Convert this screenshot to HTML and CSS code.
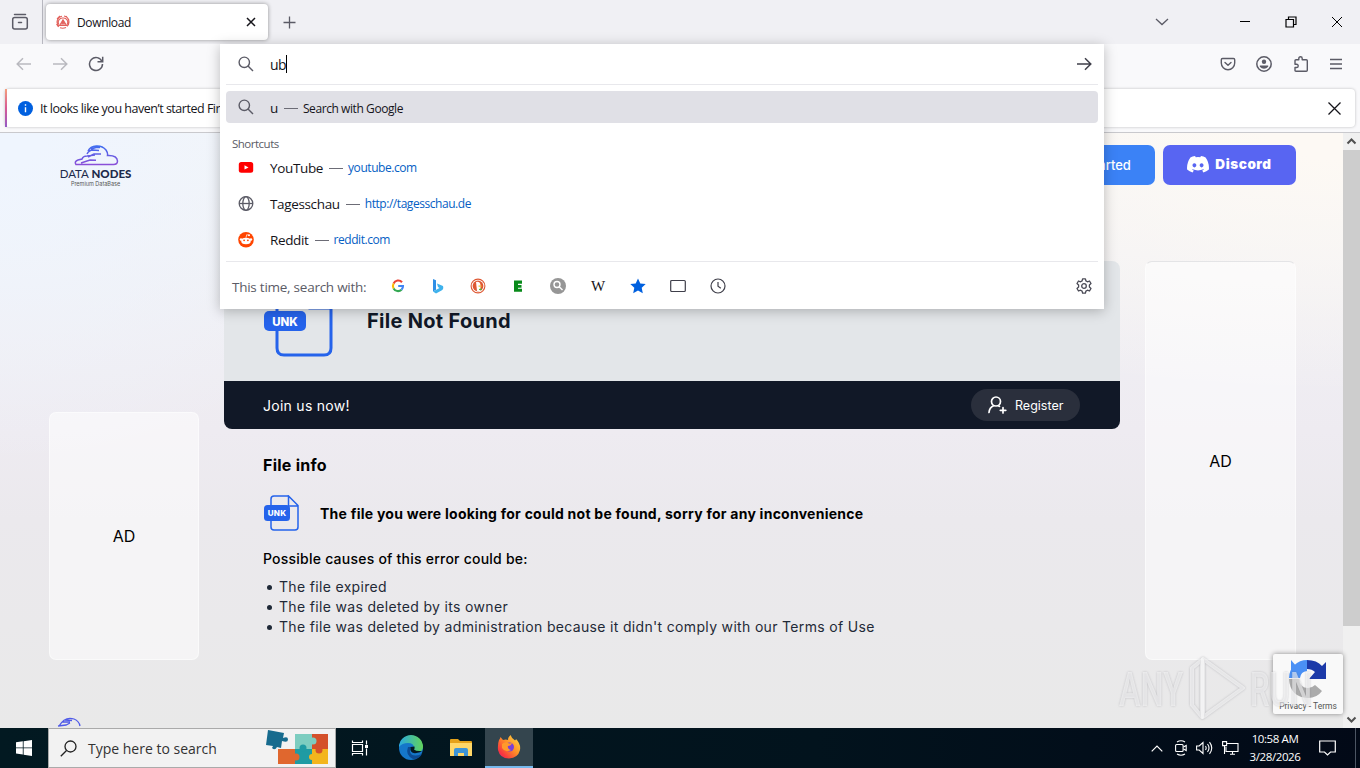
FILE: index.html
```
<!DOCTYPE html>
<html lang="en">
<head>
  <meta charset="UTF-8">
  <title>Download</title>
  <link rel="stylesheet" href="styles.css">
</head>
<body>
  <div class="tabstrip">
    <div class="view-button">
      <svg width="18" height="18" viewBox="0 0 18 18" fill="none" stroke="#5b5b66" stroke-width="1.5" stroke-linecap="round"><path d="M3.5 1.5h11"/><rect x="1.7" y="4.5" width="14.6" height="11.5" rx="2"/><path d="M7.500 9.500h3"/></svg>
    </div>
    <div class="tab">
      <svg width="14" height="14" viewBox="0 0 14 14" fill="none" stroke="#e2605b" stroke-width="1.1"><path d="M3 11.500A6 6 0 0 1 6 1.200M8 1a6 6 0 0 1 3 10.300M4 12.800q3 1 6-.3M3 9.500A4.200 4.200 0 0 1 7 3a4.200 4.200 0 0 1 4 6.500M1 4l3-3M10 1l3 4M.5 9l2 3"/><path d="M3.600 10.500L7 4.800l3.500 5.700zM6 9l1-2 1.200 2" fill="#e2605b" fill-opacity=".55"/></svg>
      <span class="tab-title">Download</span>
      <svg class="tab-close" width="10" height="10" viewBox="0 0 10 10" stroke="#15141a" stroke-width="1.500"><path d="M1 1l8 8M9 1L1 9"/></svg>
    </div>
    <svg class="new-tab" width="13" height="13" viewBox="0 0 13 13" stroke="#5b5b66" stroke-width="1.300"><path d="M6.500 .5v12M.5 6.500h12"/></svg>
    <div class="window-controls">
      <svg class="list-tabs" width="14" height="8" viewBox="0 0 14 8" fill="none" stroke="#5b5b66" stroke-width="1.300"><path d="M1 1l6 5.500L13 1"/></svg>
      <svg width="12" height="12" viewBox="0 0 12 12" stroke="#000"><path d="M1 5.500h10"/></svg>
      <svg width="12" height="12" viewBox="0 0 12 12" fill="none" stroke="#000" stroke-width="1.200"><path d="M1 3.500h7.500V11H1zM3.500 3.500V1H11v7.500H8.500"/></svg>
      <svg width="12" height="12" viewBox="0 0 12 12" stroke="#000"><path d="M1 1l10 10M11 1L1 11"/></svg>
    </div>
  </div>

  <div class="toolbar">
    <div class="nav-buttons">
      <svg class="disabled" width="16" height="14" viewBox="0 0 16 14" fill="none" stroke="#5b5b66" stroke-width="1.500"><path d="M15 7H1.500M7 1.200L1.200 7 7 12.800"/></svg>
      <svg class="disabled" width="16" height="14" viewBox="0 0 16 14" fill="none" stroke="#5b5b66" stroke-width="1.500"><path d="M1 7h13.500M9 1.200L14.800 7 9 12.800"/></svg>
      <svg width="16" height="16" viewBox="0 0 16 16" fill="none" stroke="#5b5b66" stroke-width="1.500"><path d="M14 5.500A6.500 6.500 0 1 0 14.500 8M14.700 .8v5H9.500"/></svg>
    </div>
    <div class="tool-buttons">
      <svg width="16" height="16" viewBox="0 0 16 16" fill="none" stroke="#5b5b66" stroke-width="1.400" stroke-linecap="round" stroke-linejoin="round"><path d="M2.500 2.500h11q1.200 0 1.200 1.200V7a6.700 6.700 0 0 1-13.400 0V3.700q0-1.200 1.200-1.200zM5 6.500l3 2.800 3-2.800"/></svg>
      <svg width="16" height="16" viewBox="0 0 16 16"><circle cx="8" cy="8" r="7.200" fill="none" stroke="#5b5b66" stroke-width="1.500"/><circle cx="8" cy="5.800" r="2.200" fill="#5b5b66"/><path d="M3.800 9.600h8.400v1.200q-1.800 2-4.200 2t-4.200-2z" fill="#5b5b66"/></svg>
      <svg width="16" height="16" viewBox="0 0 16 16" fill="none" stroke="#5b5b66" stroke-width="1.400" stroke-linejoin="round"><path d="M5.800 3.800V2.500q0-1.700 1.700-1.700t1.700 1.700v1.300h4.100q1 0 1 1v9.400q0 1-1 1H3q-1 0-1-1v-2.700h1.500q1.700 0 1.700-1.600T3.500 8.300H2V4.800q0-1 1-1z"/></svg>
      <svg width="14" height="12" viewBox="0 0 14 12" stroke="#5b5b66" stroke-width="1.400"><path d="M1 1.500h12M1 6h12M1 10.500h12"/></svg>
    </div>
  </div>

  <div class="notification-area">
    <div class="notification">
      <svg width="15" height="15" viewBox="0 0 15 15"><circle cx="7.500" cy="7.500" r="7.500" fill="#0060df"/><path d="M7.500 3.200v1.600M7.500 6.300v5" stroke="#fff" stroke-width="1.400"/></svg>
      <span class="notification-text">It looks like you haven’t started Firefox</span>
      <svg class="notification-close" width="13" height="13" viewBox="0 0 13 13" stroke="#15141a" stroke-width="1.300"><path d="M.5 .5l12 12M12.500 .5l-12 12"/></svg>
    </div>
  </div>

  <div class="viewport">
    <div class="page">
      <div class="site-header">
        <div class="logo">
          <svg width="46" height="22" viewBox="0 0 46 22" fill="none" stroke="#4f5ae8" stroke-width="1.500"><path d="M15 6C18 0 28-1 33 5q2 3 1.500 5.500Q44 10 44.500 16q0 3.500-4 3.500H3q-2-3 2-4.500l4-1q1-3 5-3l8-1M8 18l9-3 6 .2M14 9q2-4 6-4l6 .5M18 4l5-1.500h4M15 12l6-3h7" stroke="url(#cloud)"/><defs><linearGradient id="cloud" x1="0" y1="0" x2="0" y2="1"><stop offset="0" stop-color="#3f6df0"/><stop offset="1" stop-color="#8a4fd8"/></linearGradient></defs></svg>
          <div class="logo-name">DATA <b>NODES</b></div>
          <div class="logo-tag">Premium DataBase</div>
        </div>
        <div class="header-buttons">
          <div class="btn btn-start">Get Started</div>
          <div class="btn btn-discord">
            <svg width="22" height="17" viewBox="0 0 22 17"><path fill="#fff" fill-rule="evenodd" d="M8 0L8.800 1.300Q11 .9 13.200 1.300L14 0q2.500.3 4.600 1.500Q22.500 7 21.900 13.500 19.500 15.600 16.400 16.500l-1.200-2 1.700-.8-.5-.4q-5.400 2.300-10.800 0l-.5.4 1.700.8-1.200 2Q2.500 15.600.1 13.500-.5 7 3.400 1.500 5.500.3 8 0zM7.400 7.200a1.900 2.100 0 1 0 .01 0zM14.600 7.200a1.900 2.100 0 1 0 .01 0z"/></svg>
            <span>Discord</span>
          </div>
        </div>
      </div>

      <div class="columns">
        <div class="ad ad-left">AD</div>
        <div class="main">
          <div class="card">
            <div class="card-top">
              <svg width="70" height="72" viewBox="0 0 70 72"><path d="M44 2H19q-6 0-6 6v54q0 7 7 7h40q7 0 7-7V22L46 2v20h20" fill="none" stroke="#2563eb" stroke-width="3"/><rect x="0" y="25" width="42" height="20" rx="5" fill="#2563eb"/><text class="badge-text" x="21" y="39.500" font-size="11.500" text-anchor="middle">UNK</text></svg>
              <h1 class="card-title">File Not Found</h1>
            </div>
            <div class="card-bar">
              <span class="join">Join us now!</span>
              <div class="register">
                <svg width="19" height="18" viewBox="0 0 19 18" fill="none" stroke="#fff" stroke-width="1.700" stroke-linecap="round"><circle cx="8" cy="5.500" r="4.500"/><path d="M1 16.500q.5-5 4.500-6.700M10.500 9.800l1 .6M15 11.500v5.500M12.300 14.300h5.500"/></svg>
                <span>Register</span>
              </div>
            </div>
          </div>
          <div class="info">
            <h2 class="info-title">File info</h2>
            <div class="info-message">
              <svg width="35" height="36" viewBox="0 0 35 36"><path d="M24 1H10Q7 1 7 4v28q0 3 3 3h21q3 0 3-3V10.500L24.500 1v10H34" fill="none" stroke="#2563eb" stroke-width="1.500"/><rect x="0" y="10" width="26" height="16" rx="3.500" fill="#2563eb"/><text class="badge-text" x="13" y="21.200" font-size="8" text-anchor="middle">UNK</text></svg>
              <span>The file you were looking for could not be found, sorry for any inconvenience</span>
            </div>
            <p class="causes">Possible causes of this error could be:</p>
            <ul class="cause-list">
              <li>The file expired</li>
              <li>The file was deleted by its owner</li>
              <li>The file was deleted by administration because it didn't comply with our Terms of Use</li>
            </ul>
          </div>
        </div>
        <div class="ad ad-right">AD</div>
      </div>

      <svg class="footer-logo" width="46" height="22" viewBox="0 0 46 22" fill="none" stroke="#4f5ae8" stroke-width="1.300"><path d="M3 9Q9-1 18 2q5 2 6 7M6 5h8M9 3l7 .5M2 9l8-1 4-2"/></svg>

      <div class="recaptcha">
        <svg width="38" height="38" viewBox="0 0 38 38"><path d="M0 18A18 18 0 0 1 18 0v11a8 8 0 0 0-7 7z" fill="#4a90f5"/><path d="M2 0v12l6-5z" fill="#4a90f5"/><path d="M18 0q10 0 15 6l4-4v17H20l6-7q-3-3-8-3z" fill="#1c3aa9"/><path d="M0 19h10q1 9 9 9 4 0 7-3l7 6q-5 7-14 7Q1 37 0 19z" fill="#ababab"/></svg>
        <span>Privacy - Terms</span>
      </div>
    </div>
    <div class="scrollbar">
      <svg width="17" height="17" viewBox="0 0 17 17" fill="none" stroke="#505050" stroke-width="2"><path d="M4.500 10.500l4-4 4 4"/></svg>
      <div class="thumb"></div>
      <svg class="scroll-down" width="17" height="17" viewBox="0 0 17 17" fill="none" stroke="#505050" stroke-width="2"><path d="M4.500 6.500l4 4 4-4"/></svg>
    </div>
  </div>

  <div class="taskbar">
    <div class="start">
      <svg width="16" height="16" viewBox="0 0 16 16" fill="#fff"><path d="M0 2.300L6.800 1.300v6.200H0zM7.600 1.200L16 0v7.500H7.600zM0 8.300h6.800v6.300L0 13.600zM7.600 8.300H16V16l-8.400-1.200z"/></svg>
    </div>
    <div class="search">
      <svg width="17" height="17" viewBox="0 0 17 17" fill="none" stroke="#222" stroke-width="1.300"><circle cx="10.500" cy="6.500" r="5.500"/><path d="M6.500 10.500L.8 16.200"/></svg>
      <span class="search-text">Type here to search</span>
      <svg class="puzzle" width="64" height="36" viewBox="0 0 64 36"><path d="M29 4h17v15H29z" fill="#7dcdc0"/><path d="M46 4h16v15H46z" fill="#d4502b"/><path d="M12 19h17v15H12z" fill="#e0672e"/><path d="M29 19h17v15H29z" fill="#1f9ba3"/><path d="M46 19h16v15H46z" fill="#f3b51d"/><circle cx="47" cy="11" r="3.500" fill="#7dcdc0"/><circle cx="37" cy="18" r="3.500" fill="#1f9ba3"/><circle cx="53" cy="20" r="3.500" fill="#d4502b"/><circle cx="30" cy="27" r="3.500" fill="#e0672e"/><circle cx="46" cy="27" r="3" fill="#f3b51d"/><path d="M2 0l16 3-1 5q5-2 5 1.500t-6 1.500l-1 7-4-1q-2 4-5 1l1-2-7-1z" fill="#176b8e"/></svg>
    </div>
    <div class="task">
      <svg width="18" height="18" viewBox="0 0 18 18" fill="none" stroke="#fff" stroke-width="1.200"><path d="M1.500 1.500v2h10v-2M1.500 16.500v-2h10v2M1.500 5.500h10v7h-10zM15.500 1.500v4M15.500 9.500v7"/><path d="M14 6h3v3h-3z" fill="#fff" stroke="none"/></svg>
    </div>
    <div class="task task-edge">
      <svg width="26" height="26" viewBox="0 0 26 26"><defs><linearGradient id="edgeTop" x1="0" x2="1"><stop offset="0" stop-color="#2aa9e0"/><stop offset="1" stop-color="#62d35a"/></linearGradient></defs><circle cx="13" cy="13" r="12" fill="#1577ca"/><path d="M1 12A12 12 0 0 1 25 12q0 5-6 5-5 0-3-4 0-5-6-5-6 0-9 4z" fill="url(#edgeTop)"/><path d="M10 12q-3 8 5 12 6 .5 9-5-10 4-12-2-1-3 1-5z" fill="#0c4b93"/><path d="M12.500 12q-1 7 6 6 4-.5 5.500-2-6 .5-8-1.500 1-1 .5-3z" fill="#041922"/></svg>
    </div>
    <div class="task task-files">
      <svg width="22" height="20" viewBox="0 0 22 20"><path d="M0 2q0-1 1-1h7l2 2h11q1 0 1 1v14H0z" fill="#e5a21a"/><path d="M0 5h22v13H0z" fill="#ffd768"/><path d="M4 18v-6q0-2 2-2h10q2 0 2 2v6h-4v-3H8v3z" fill="#3d94d6"/></svg>
    </div>
    <div class="task task-active">
      <svg width="24" height="24" viewBox="0 0 24 24"><defs><linearGradient id="fox" x1="1" y1="0" x2="0" y2="1"><stop offset="0" stop-color="#ffe14a"/><stop offset=".45" stop-color="#ff9127"/><stop offset=".8" stop-color="#f8363f"/><stop offset="1" stop-color="#e3207a"/></linearGradient></defs><path d="M2 5q1-1 1.500-3l2.500 3q3-1 5 0 0-3 2.500-5 1 3 4 5 1 1 1.500-1 5 5 4 11-2 8-11 8.500Q3 23.500 1 15 .5 9 2 5z" fill="url(#fox)"/><circle cx="12.500" cy="12" r="4.500" fill="#7a3fd8"/><path d="M5 9q4-3 7-.5l3-.5q-1 3-4 3-1 3 3 4-6 3-9-2z" fill="#ff9a2b"/></svg>
    </div>
    <div class="tray">
      <svg width="12" height="7" viewBox="0 0 12 7" fill="none" stroke="#fff" stroke-width="1.200"><path d="M.7 6.300L6 1l5.300 5.300"/></svg>
      <svg width="12" height="16" viewBox="0 0 12 16" fill="none" stroke="#fff" stroke-width="1.100"><rect x=".6" y="4.500" width="7.500" height="7" rx="1"/><path d="M8.500 7l2.700-1.500v5L8.500 9M2 2q4-2.500 8 0M2 14q4 2.500 8 0"/></svg>
      <svg width="17" height="14" viewBox="0 0 17 14" fill="none" stroke="#fff" stroke-width="1.100"><path d="M.6 5h2.600L7 1.500v11L3.200 9H.6zM9.500 5q1.300 2 0 4M11.500 3q3 4 0 8M13.500 1.200q4.500 5.800 0 11.600"/></svg>
      <svg width="17" height="14" viewBox="0 0 17 14" fill="none" stroke="#fff" stroke-width="1.100"><path d="M5 2.500h11v8H4V6M8 13.300h5M10.500 10.500v3M.6 .6h4v4h-4zM2.500 4.600v8.500"/></svg>
      <div class="clock"><span class="time">10:58 AM</span><span>3/28/2026</span></div>
      <svg width="17" height="16" viewBox="0 0 17 16" fill="none" stroke="#fff" stroke-width="1.200"><path d="M.7 1h15.600v11h-4.800L8.500 15l-3-3H.7z"/></svg>
    </div>
    <div class="show-desktop"></div>
  </div>

  <!-- address bar dropdown -->
  <div class="urlbar">
    <div class="url-input">
      <svg width="16" height="16" viewBox="0 0 16 16" fill="none" stroke="#5b5b66" stroke-width="1.400"><circle cx="6.300" cy="6.300" r="5.200"/><path d="M10 10l5 5"/></svg>
      <span class="typed">ub</span><span class="caret"></span>
      <svg class="go" width="16" height="14" viewBox="0 0 16 14" fill="none" stroke="#3f3f4a" stroke-width="1.500"><path d="M1 7h13.500M9 1.200L14.800 7 9 12.800"/></svg>
    </div>
    <div class="results">
      <div class="result selected">
        <svg width="16" height="16" viewBox="0 0 16 16" fill="none" stroke="#5b5b66" stroke-width="1.400"><circle cx="6.300" cy="6.300" r="5.200"/><path d="M10 10l5 5"/></svg>
        <span class="name">u</span><i class="dash"></i><span class="action">Search with Google</span>
      </div>
      <div class="group-label">Shortcuts</div>
      <div class="result">
        <svg width="16" height="16" viewBox="0 0 16 16"><rect x=".8" y="2" width="14.400" height="10.800" rx="2.500" fill="#f00"/><path d="M6.500 5.200l4 2.200-4 2.200z" fill="#fff"/></svg>
        <span class="name">YouTube</span><i class="dash"></i><span class="url">youtube.com</span>
      </div>
      <div class="result">
        <svg width="16" height="16" viewBox="0 0 16 16" fill="none" stroke="#5b5b66" stroke-width="1.300"><circle cx="8" cy="7.500" r="6.800"/><ellipse cx="8" cy="7.500" rx="3.200" ry="6.800"/><path d="M1.200 7.500h13.600"/></svg>
        <span class="name">Tagesschau</span><i class="dash"></i><span class="url">http://tagesschau.de</span>
      </div>
      <div class="result">
        <svg width="16" height="16" viewBox="0 0 16 16"><circle cx="8" cy="7.800" r="7.800" fill="#ff4500"/><ellipse cx="8" cy="9" rx="4.800" ry="3.300" fill="#fff"/><circle cx="3" cy="7.500" r="1.200" fill="#fff"/><circle cx="13" cy="7.500" r="1.200" fill="#fff"/><circle cx="11" cy="3.200" r="1" fill="#fff"/><path d="M8 5.700l.7-3 2 .5" stroke="#fff" stroke-width=".7" fill="none"/><circle cx="6.100" cy="8.300" r=".9" fill="#ff4500"/><circle cx="9.900" cy="8.300" r=".9" fill="#ff4500"/></svg>
        <span class="name">Reddit</span><i class="dash"></i><span class="url">reddit.com</span>
      </div>
    </div>
    <div class="one-offs">
      <span class="one-offs-label">This time, search with:</span>
      <div class="engines">
        <svg width="16" height="16" viewBox="0 0 16 16" fill="none" stroke-width="2.100"><path d="M12 4.200A5 5 0 0 0 3.600 5.500" stroke="#ea4335"/><path d="M3.600 5.500a5 5 0 0 0 0 5" stroke="#fbbc05"/><path d="M3.600 10.500a5 5 0 0 0 7.900 1.200" stroke="#34a853"/><path d="M11.500 11.700A5 5 0 0 0 13 8H8.200" stroke="#4285f4"/></svg>
        <svg width="16" height="16" viewBox="0 0 16 16"><path d="M3 1l3 1.200v9.500L3 13.500z" fill="#2f8fe6"/><path d="M7 5.500l6 2.500q1 3-1.500 4.500L6 15.500l-3-2 6.500-3.500-1.500-1z" fill="#3fb2ec"/></svg>
        <svg width="16" height="16" viewBox="0 0 16 16"><circle cx="8" cy="8" r="6.900" fill="#fff" stroke="#de5833" stroke-width="1.100"/><circle cx="8" cy="8" r="5.400" fill="#de5833"/><path d="M6 4q4-1 4.500 3v6q-2 .6-3.500 0z" fill="#fff"/><path d="M8.500 7.500h3v1.200h-3z" fill="#fdbe2d"/><path d="M9 11l2.500-.8v2L9 12z" fill="#4cba3c"/></svg>
        <svg width="16" height="16" viewBox="0 0 16 16"><path d="M4 2.500h8v3.300H8v1.200h3.500v2.800H8v1H12v3H4z" fill="#088a1a"/></svg>
        <svg width="16" height="16" viewBox="0 0 16 16"><circle cx="8" cy="8" r="8" fill="#969696"/><g fill="none" stroke="#fff" stroke-width="1.400"><circle cx="7" cy="6.500" r="3"/><path d="M9.200 8.700l3.300 3.300"/></g></svg>
        <span class="wiki">W</span>
        <svg width="16" height="16" viewBox="0 0 16 16"><path d="M8 .5l2.300 4.900 5.400.7-4 3.700 1.100 5.500L8 12.600l-4.800 2.700 1.100-5.500-4-3.700 5.400-.7z" fill="#0060df"/></svg>
        <svg width="16" height="16" viewBox="0 0 16 16" fill="none" stroke="#3f3f4a" stroke-width="1.200"><rect x=".7" y="2.500" width="14.600" height="11" rx="1"/></svg>
        <svg width="16" height="16" viewBox="0 0 16 16" fill="none" stroke="#3f3f4a" stroke-width="1.200"><circle cx="8" cy="8" r="7"/><path d="M8 4v4.200l2.800 2"/></svg>
      </div>
      <svg class="gear" width="16" height="16" viewBox="0 0 16 16" fill="none" stroke="#4a4a55" stroke-width="1.300" stroke-linejoin="round"><circle cx="8" cy="8" r="2.300"/><path d="M6.600 .8h2.800l.5 2.100 1.600.9 2-.8 1.500 2.500-1.600 1.500v2l1.600 1.500-1.500 2.500-2-.8-1.600.9-.5 2.100H6.600l-.5-2.100-1.600-.9-2 .8L1 10.500 2.600 9V7L1 5.500 2.500 3l2 .8 1.600-.9z"/></svg>
    </div>
  </div>

  <svg class="watermark" width="210" height="70" viewBox="0 0 210 70">
    <text x="4" y="52" textLength="64" lengthAdjust="spacingAndGlyphs">ANY</text>
    <text x="135" y="52" textLength="62" lengthAdjust="spacingAndGlyphs">RUN</text>
    <g class="watermark-mark"><path d="M77 14v37l10 12V6z"/><path d="M88 5v58l40-29z"/></g>
  </svg>
</body>
</html>
```
FILE: styles.css
```
* {
  box-sizing: border-box;
}

body {
  margin: 0;
  width: 1360px;
  height: 768px;
  overflow: hidden;
  display: flex;
  flex-direction: column;
  font-family: "Open Sans", "Noto Sans", sans-serif;
  font-size: 13px;
  color: #15141a;
  position: relative;
}

svg {
  flex: none;
  display: block;
}

span {
  white-space: nowrap;
}

/* browser chrome */
.tabstrip {
  height: 44px;
  background: #f0f0f4;
  display: flex;
  align-items: center;
}

.view-button {
  width: 43px;
  height: 44px;
  padding: 13px 0 0 11px;
  border-right: 1px solid #b8b8c0;
}

.tab {
  width: 222px;
  height: 36px;
  margin-left: 3px;
  padding: 0 12px 0 10px;
  display: flex;
  align-items: center;
  background: #fff;
  border-radius: 4px;
  box-shadow: 0 0 4px rgba(0, 0, 0, 0.4);
}

.tab-title {
  margin-left: 7px;
  font-size: 12px;
  letter-spacing: -0.35px;
}

.tab-close {
  margin-left: auto;
}

.new-tab {
  margin-left: 15px;
}

.window-controls {
  margin-left: auto;
  padding-right: 17px;
  display: flex;
  align-items: center;
  gap: 34px;
}

.list-tabs {
  margin-right: 36px;
}

.toolbar {
  height: 44px;
  background: #f9f9fb;
  display: flex;
  justify-content: space-between;
  align-items: center;
  padding: 0 17px 4px 16px;
}

.nav-buttons,
.tool-buttons {
  display: flex;
  align-items: center;
  gap: 20px;
}

.tool-buttons {
  gap: 20.5px;
}

.disabled {
  opacity: 0.4;
}

.notification-area {
  height: 45px;
  padding: 1px 5px 0;
  background: #f9f9fb;
  border-bottom: 1px solid #c9c9cd;
}

.notification {
  height: 38px;
  display: flex;
  align-items: center;
  padding: 0 14px 0 11px;
  background: #fff;
  border-radius: 4px;
  border-left: 2px solid;
  border-image: linear-gradient(#f5a37c, #d85a94, #9059c8) 1;
  box-shadow: 0 0 3px rgba(0, 0, 0, 0.25);
}

.notification-text {
  margin-left: 7px;
  font-size: 12.5px;
  letter-spacing: -0.48px;
}

.notification-close {
  margin-left: auto;
}

/* web page */
.viewport {
  height: 595px;
  display: flex;
  overflow: hidden;
}

.page {
  flex: 1;
  position: relative;
  background:
    radial-gradient(ellipse 420px 330px at 0 0, #eff5fe 10%, rgba(239, 245, 254, 0)),
    radial-gradient(ellipse 700px 260px at 100% 0, #fdf9f4 10%, rgba(253, 249, 244, 0)),
    linear-gradient(#f3f5f7, #eeebf1 50%, #ebe9ed 65%, #e9e9e9 100%);
  color: #000;
  font-family: Inter, sans-serif;
}

.site-header {
  height: 128px;
  padding: 12px 47px 0 60px;
  display: flex;
  justify-content: space-between;
}

.logo {
  width: 71px;
  display: flex;
  flex-direction: column;
  align-items: center;
  white-space: nowrap;
  color: #1d2a4a;
}

.logo-name {
  font: 11.5px/14px Lato, sans-serif;
}

.logo-name b {
  font-weight: 900;
}

.logo-tag {
  font-size: 5.5px;
  line-height: 7px;
  color: #555;
}

.header-buttons {
  display: flex;
  gap: 8px;
}

.btn {
  height: 40px;
  border-radius: 7px;
  color: #fff;
  display: flex;
  align-items: center;
  justify-content: center;
}

.btn-start {
  width: 135px;
  padding-left: 16px;
  background: #3b82f6;
  font-size: 13px;
  font-weight: 500;
}

.btn-discord {
  width: 133px;
  padding-bottom: 2px;
  gap: 6px;
  background: #5865f2;
  font-size: 13.5px;
  font-weight: 900;
  letter-spacing: 0.55px;
}

.columns {
  height: 399px;
  display: flex;
  align-items: flex-end;
  padding-left: 49px;
  gap: 25px;
}

.ad {
  width: 150px;
  display: flex;
  align-items: center;
  justify-content: center;
  font-size: 16px;
  background: rgba(255, 255, 255, 0.5);
  border: 1px solid rgba(255, 255, 255, 0.5);
  border-radius: 7px;
}

.ad-left {
  height: 248px;
}

.ad-right {
  width: 151px;
  height: 399px;
  border-top-color: #e4e4e6;
}

.main {
  width: 896px;
  height: 399px;
}

.card {
  border-radius: 8px;
  overflow: hidden;
}

.card-top {
  height: 120px;
  padding: 25px 40px 0;
  display: flex;
  gap: 33px;
  background: #e3e6e9;
}

.badge-text {
  font-family: Inter, sans-serif;
  font-weight: 800;
  fill: #fff;
}

.card-title {
  margin: 22px 0 0;
  font-size: 20px;
  line-height: 26px;
  letter-spacing: 0.3px;
  color: #111827;
}

.card-bar {
  height: 48px;
  padding: 0 40px 0 39px;
  display: flex;
  align-items: center;
  justify-content: space-between;
  background: #111827;
  color: #fff;
}

.join {
  font-size: 14px;
  letter-spacing: 0.27px;
}

.register {
  width: 109px;
  height: 32px;
  border-radius: 16px;
  background: #2a2f3c;
  display: flex;
  align-items: center;
  padding-left: 17px;
  gap: 8px;
  font-size: 12.5px;
}

.info {
  padding: 24px 39px 0;
}

.info-title {
  margin: 0;
  font-size: 16px;
  line-height: 24px;
  letter-spacing: 0.25px;
}

.info-message {
  margin: 18px 0 0 1px;
  display: flex;
  align-items: center;
  gap: 21px;
  font-size: 14px;
  font-weight: 700;
  letter-spacing: 0.25px;
}

.causes {
  margin: 18px 0 0;
  font-size: 14px;
  line-height: 20px;
  font-weight: 500;
  letter-spacing: 0.23px;
}

.cause-list {
  margin: 8px 0 0;
  padding-left: 4px;
  list-style: none;
  font-size: 14px;
  line-height: 20px;
  letter-spacing: 0.33px;
  color: #1f2937;
}

.cause-list li {
  display: flex;
  align-items: center;
  gap: 7px;
}

.cause-list li::before {
  content: "";
  width: 5px;
  height: 5px;
  border-radius: 50%;
  background: #1f2937;
}

.footer-logo {
  margin: 57px 0 0 56px;
}

.recaptcha {
  position: absolute;
  right: 0;
  bottom: 14px;
  width: 70px;
  height: 60px;
  padding-top: 6px;
  display: flex;
  flex-direction: column;
  align-items: center;
  background: #f9f9f9;
  box-shadow: 0 0 5px #888;
  border-radius: 2px;
  font: 8.500px/16px Roboto, sans-serif;
  color: #555;
}

.scrollbar {
  width: 17px;
  background: #f0f0f0;
  display: flex;
  flex-direction: column;
}

.thumb {
  height: 476px;
  background: #cdcdcd;
}

.scroll-down {
  margin-top: auto;
}

/* windows taskbar */
.taskbar {
  height: 40px;
  display: flex;
  background: linear-gradient(90deg, #021921, #02131d 60%, #020917);
  color: #fff;
}

.start,
.task {
  width: 48px;
  display: flex;
  align-items: center;
  justify-content: center;
}

.search {
  width: 288px;
  background: #f2f2f2;
  border: 1px solid #aaa;
  display: flex;
  align-items: center;
  padding: 0 5px 0 11px;
  color: #333;
}

.search-text {
  margin-left: 11px;
  font-size: 14px;
}

.puzzle {
  margin-left: auto;
}

.task-edge {
  width: 53px;
}

.task-files {
  width: 48px;
}

.task-active {
  background: #34454e;
  border-bottom: 2px solid #76b9ed;
}

.tray {
  margin-left: auto;
  display: flex;
  align-items: center;
  gap: 9px;
}

.tray svg:first-child {
  margin-right: 3px;
}

.clock {
  width: 60px;
  display: flex;
  flex-direction: column;
  align-items: center;
  font-size: 11.5px;
  line-height: 18px;
  letter-spacing: -0.4px;
  margin: 0 5px 0 -3px;
}

.show-desktop {
  width: 5px;
  margin-left: 19px;
  border-left: 1px solid #4c5563;
}

/* address bar panel, floats over the page */
.urlbar {
  position: absolute;
  left: 220px;
  top: 44px;
  width: 884px;
  height: 265px;
  background: #fff;
  box-shadow: 0 2px 12px rgba(0, 0, 0, 0.25);
}

.url-input {
  height: 41px;
  margin: 0 6px;
  padding: 0 6px 0 12px;
  display: flex;
  align-items: center;
  border-bottom: 1px solid #e8e8ec;
}

.typed {
  margin-left: 16px;
  padding-top: 1px;
  font-size: 14px;
  letter-spacing: -0.6px;
}

.caret {
  width: 1px;
  height: 18px;
  background: #000;
}

.go {
  margin-left: auto;
}

.results {
  height: 176px;
  padding: 6px 6px 0;
}

.result {
  height: 36px;
  padding: 0 0 1px 12px;
  display: flex;
  align-items: center;
  border-radius: 4px;
}

.result.selected {
  height: 32px;
  padding-bottom: 0;
  background: #e0e0e6;
}

.name {
  margin-left: 16px;
  font-size: 13.5px;
  letter-spacing: -0.35px;
}

.result.selected .name,
.action {
  padding-top: 2px;
}

.dash {
  width: 14px;
  height: 1px;
  margin: 2px 5px 0 6px;
  background: #6c6c76;
}

.action {
  font-size: 12px;
  letter-spacing: -0.42px;
}

.url {
  font-size: 12px;
  letter-spacing: -0.45px;
  color: #0560c4;
}

.group-label {
  height: 27px;
  padding: 12px 0 0 6px;
  line-height: 17px;
  font-size: 11.5px;
  letter-spacing: -0.5px;
  color: #5b5b66;
}

.one-offs {
  height: 48px;
  margin: 0 6px;
  padding: 1px 6px 0 6px;
  display: flex;
  align-items: center;
  border-top: 1px solid #e8e8ec;
}

.one-offs-label {
  width: 158px;
  padding-top: 1px;
  font-size: 13.5px;
  letter-spacing: -0.25px;
  color: #5b5b66;
}

.engines {
  display: flex;
  align-items: center;
  gap: 24px;
}

.wiki {
  width: 16px;
  text-align: center;
  font: 15px "Liberation Serif", serif;
}

.gear {
  margin-left: auto;
}

/* overlay mark in the corner of the recording */
.watermark {
  position: absolute;
  left: 1115px;
  top: 654px;
  overflow: visible;
  filter: drop-shadow(0 0 1px rgba(110, 110, 120, 0.6));
}

.watermark text {
  font: 500 49px Roboto, sans-serif;
  fill: rgba(255, 255, 255, 0.55);
}

.watermark-mark {
  fill: none;
  stroke: rgba(255, 255, 255, 0.6);
  stroke-width: 4px;
  stroke-linejoin: round;
}
```
